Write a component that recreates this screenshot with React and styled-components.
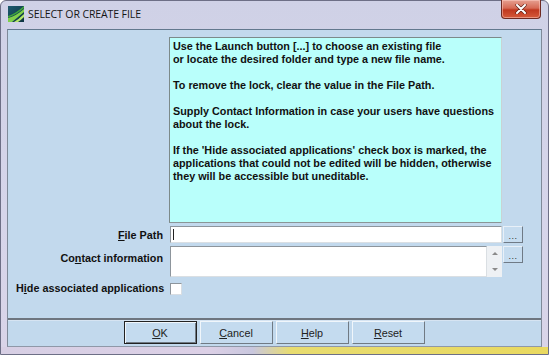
import React from 'react';
import styled, { createGlobalStyle } from 'styled-components';

const GlobalStyle = createGlobalStyle`
  html, body {
    margin: 0;
    padding: 0;
    width: 549px;
    height: 355px;
    overflow: hidden;
    background: #ffffff;
  }
`;

const Window = styled.div`
  width: 549px;
  height: 355px;
  box-sizing: border-box;
  display: flex;
  flex-direction: column;
  background: linear-gradient(180deg, #cfd1e6 0%, #d6d5ea 60%, #d9d4e8 100%);
  border: 1px solid #6d6f86;
  border-radius: 6px 6px 0 0;
  padding: 0 6px 0 6px;
  font-family: "Liberation Sans", Arial, sans-serif;
`;

const TitleBar = styled.div`
  height: 28px;
  display: flex;
  align-items: flex-start;
  position: relative;
`;

const TitleIcon = styled.svg`
  width: 16px;
  height: 16px;
  margin: 5px 0 0 1px;
  flex: none;
`;

const TitleText = styled.span`
  margin: 6px 0 0 4px;
  font-family: "Open Sans", "Liberation Sans", sans-serif;
  font-size: 10.5px;
  color: #151515;
  letter-spacing: -0.1px;
`;

const CloseButton = styled.div`
  position: absolute;
  right: 1px;
  top: -1px;
  width: 40px;
  height: 19px;
  border: 1px solid #6e2a22;
  border-top: none;
  border-radius: 0 0 4px 4px;
  box-sizing: border-box;
  background: linear-gradient(180deg, #e6a091 0%, #d66a55 45%, #c0381f 55%, #d55a3a 100%);
  display: flex;
  align-items: center;
  justify-content: center;
  box-shadow: inset 0 0 0 1px rgba(255, 210, 200, 0.5);
`;

const Client = styled.div`
  flex: 1;
  display: flex;
  flex-direction: column;
  background: #c2d9ed;
  border-top: 1px solid #62788e;
  border-left: 1px solid #7f8a99;
  border-right: 1px solid #7f8a99;
  border-bottom: 1px solid #8f98a8;
`;

const FormGrid = styled.div`
  flex: 1;
  display: grid;
  grid-template-columns: 161px 333px 21px;
  row-gap: 3px;
  padding: 7px 0 0 0;
  align-content: start;
  font-size: 10.8px;
  font-weight: bold;
  color: #111;
`;

const Label = styled.div`
  grid-column: 1;
  justify-self: ${p => (p.$left ? 'start' : 'end')};
  align-self: ${p => (p.$top ? 'start' : 'center')};
  padding: ${p => (p.$top ? '6px 6px 0 0' : '0 6px 0 0')};
  margin-left: ${p => (p.$left ? '8px' : '0')};
  white-space: nowrap;
  u { text-decoration: underline; }
`;

const InfoPanel = styled.div`
  grid-column: 2;
  height: 186px;
  box-sizing: border-box;
  background: #b9fffb;
  border: 1px solid #7c8a8a;
  border-right-color: #c8d4d4;
  border-bottom-color: #8a9696;
  padding: 2px 3px;
  line-height: 13px;
  p { margin: 0 0 13px 0; }
`;

const TextInput = styled.div`
  grid-column: 2;
  height: ${p => p.$h}px;
  box-sizing: border-box;
  background: #ffffff;
  border: 1px solid #8d959c;
  border-right-color: #dadfe3;
  border-bottom-color: #dadfe3;
  margin-left: 1px;
  margin-right: ${p => (p.$narrow ? '15px' : '0')};
  display: flex;
  justify-content: space-between;
`;

const Caret = styled.span`
  width: 1px;
  height: 11px;
  margin: 2px 0 0 2px;
  background: #222;
`;

const Scroll = styled.div`
  grid-column: 2;
  justify-self: end;
  width: 15px;
  height: 31px;
  background: #eef1f4;
  display: flex;
  flex-direction: column;
  justify-content: space-between;
  align-items: center;
  padding: 6px 0 6px;
  box-sizing: border-box;
`;

const Arrow = styled.span`
  width: 0;
  height: 0;
  border-left: 3px solid transparent;
  border-right: 3px solid transparent;
  ${p => (p.$up ? 'border-bottom: 3px solid #8a8a8a;' : 'border-top: 3px solid #8a8a8a;')}
`;

const ContactField = styled.div`
  grid-column: 2;
  display: flex;
`;

const ContactBox = styled.div`
  flex: 1;
  height: 31px;
  box-sizing: border-box;
  background: #ffffff;
  border: 1px solid #8d959c;
  border-right-color: #dadfe3;
  border-bottom-color: #dadfe3;
  margin-left: 1px;
`;

const DotsButton = styled.div`
  grid-column: 3;
  align-self: start;
  width: 20px;
  height: 17px;
  box-sizing: border-box;
  margin-left: 1px;
  background: #c6dcef;
  border: 1px solid #e8f0f8;
  border-right-color: #6f7a86;
  border-bottom-color: #6f7a86;
  display: flex;
  align-items: flex-end;
  justify-content: center;
  font-size: 9px;
  font-weight: normal;
  line-height: 10px;
  color: #333;
  letter-spacing: 0.5px;
  padding-bottom: 1px;
`;

const CheckBox = styled.div`
  grid-column: 2;
  margin: 3px 0 0 1px;
  width: 12px;
  height: 12px;
  box-sizing: border-box;
  background: #fff;
  border: 1px solid #8d959c;
  border-right-color: #d8dde2;
  border-bottom-color: #d8dde2;
`;

const Separator = styled.div`
  height: 2px;
  background: #6e7680;
  border-bottom: 1px solid #d6e4f2;
`;

const ButtonRow = styled.div`
  height: 25px;
  display: flex;
  justify-content: center;
  align-items: flex-start;
  gap: 3px;
  padding-right: 1px;
`;

const DialogButton = styled.div`
  width: 73px;
  height: 23px;
  box-sizing: border-box;
  background: #c4dbef;
  border: 1px solid ${p => (p.$default ? '#222' : '#f0f6fb')};
  border-right-color: ${p => (p.$default ? '#222' : '#707a84')};
  border-bottom-color: ${p => (p.$default ? '#222' : '#707a84')};
  box-shadow: ${p => (p.$default ? 'inset 1px 1px 0 #f0f6fb, inset -1px -1px 0 #707a84' : 'none')};
  display: flex;
  align-items: center;
  justify-content: center;
  font-size: 10.8px;
  color: #222;
  u { text-decoration: underline; }
`;

const BottomEdge = styled.div`
  height: 7px;
  margin: 0 -6px;
  background: linear-gradient(90deg, #d7cfe4 0%, #dcd0e6 38%, #c9c7de 46%, #e8dc70 53%, #e9d960 100%);
`;

const AppIcon = () => (
  <TitleIcon viewBox="0 0 16 16">
    <defs>
      <linearGradient id="ig" x1="0" y1="0" x2="1" y2="1">
        <stop offset="0" stopColor="#1d5a6e" />
        <stop offset="1" stopColor="#0d3340" />
      </linearGradient>
    </defs>
    <rect x="0" y="0" width="16" height="16" fill="url(#ig)" />
    <path d="M0 16 L0 12 Q8 10 16 3 L16 6 Q9 12 4 16 Z" fill="#7fd04a" />
    <path d="M0 10 Q7 8 16 0 L16 2 Q8 9 0 11.5 Z" fill="#3faa3a" />
    <path d="M6 16 Q11 13 16 8 L16 11 Q13 14 10 16 Z" fill="#b5e86a" />
  </TitleIcon>
);

const App = () => (
  <>
    <GlobalStyle />
    <Window>
      <TitleBar>
        <AppIcon />
        <TitleText>SELECT OR CREATE FILE</TitleText>
        <CloseButton>
          <svg width="12" height="10" viewBox="0 0 12 10">
            <path d="M2 1 L10 9 M10 1 L2 9" stroke="#5a1d14" strokeWidth="3.2" strokeLinecap="round" />
            <path d="M2 1 L10 9 M10 1 L2 9" stroke="#ffffff" strokeWidth="2" strokeLinecap="round" />
          </svg>
        </CloseButton>
      </TitleBar>
      <Client>
        <FormGrid>
          <div />
          <InfoPanel>
            <p>Use the Launch button [...] to choose an existing file<br />or locate the desired folder and type a new file name.</p>
            <p>To remove the lock, clear the value in the File Path.</p>
            <p>Supply Contact Information in case your users have questions<br />about the lock.</p>
            <p>If the 'Hide associated applications' check box is marked, the<br />applications that could not be edited will be hidden, otherwise<br />they will be accessible but uneditable.</p>
          </InfoPanel>
          <div />

          <Label><u>F</u>ile Path</Label>
          <TextInput $h={17}><Caret /></TextInput>
          <DotsButton>...</DotsButton>

          <Label $top>Co<u>n</u>tact information</Label>
          <ContactField>
            <ContactBox />
            <Scroll><Arrow $up /><Arrow /></Scroll>
          </ContactField>
          <DotsButton>...</DotsButton>

          <Label $left>H<u>i</u>de associated applications</Label>
          <CheckBox />
        </FormGrid>
        <Separator />
        <ButtonRow>
          <DialogButton $default><u>O</u>K</DialogButton>
          <DialogButton><u>C</u>ancel</DialogButton>
          <DialogButton><u>H</u>elp</DialogButton>
          <DialogButton><u>R</u>eset</DialogButton>
        </ButtonRow>
      </Client>
      <BottomEdge />
    </Window>
  </>
);

export default App;
